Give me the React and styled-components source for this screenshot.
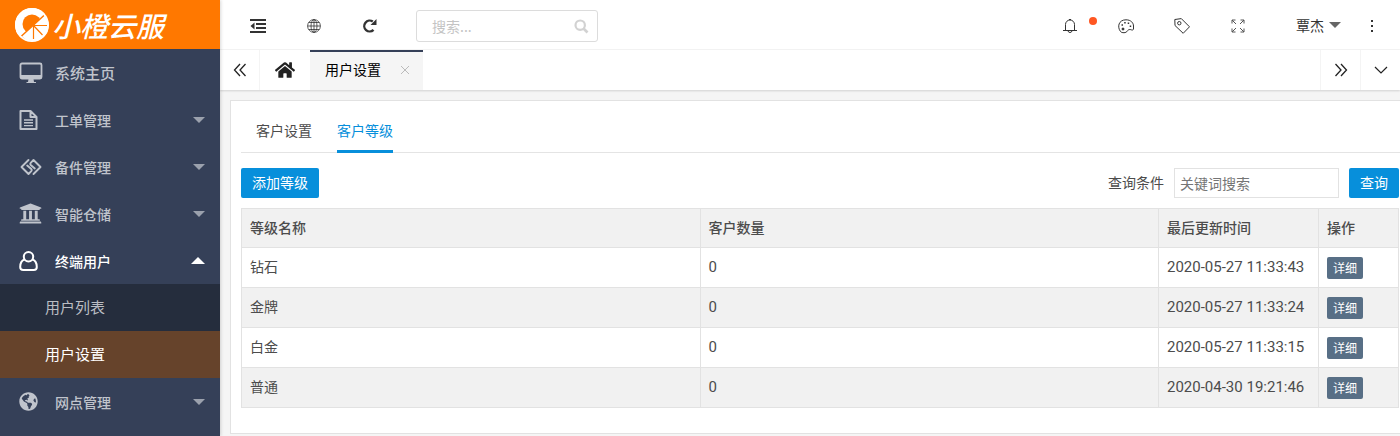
import React from 'react';
import styled, { createGlobalStyle } from 'styled-components';
import { FaHome, FaUniversity, FaGlobeAmericas } from 'react-icons/fa';

const GlobalStyle = createGlobalStyle`
  * {
    box-sizing: border-box;
  }
  body {
    margin: 0;
    background: #f5f5f5;
    color: #4c4c4c;
    font: 14px/20px "Noto Sans CJK SC", sans-serif;
  }
  a {
    color: inherit;
    text-decoration: none;
  }
  button, input {
    font: inherit;
  }
  button {
    padding: 0;
    border: 0;
    background: none;
    color: inherit;
    cursor: pointer;
  }
  svg {
    display: block;
    flex: none;
  }
`;

const Layout = styled.div`
  display: grid;
  grid-template-columns: 220px minmax(0, 1fr);
  min-height: 100vh;
`;

/* sidebar */

const Sidebar = styled.aside`
  background: #354058;
  box-shadow: 1px 0 3px rgba(0, 0, 0, 0.15);
  z-index: 1;
`;

const Brand = styled.a`
  display: flex;
  align-items: center;
  gap: 3px;
  height: 49px;
  padding-left: 15px;
  background: #ff7800;
  color: #fff;
  font-size: 28px;
  font-weight: 500;
  line-height: 46px;
  font-style: italic;
`;

const MenuLink = styled.a`
  display: flex;
  align-items: center;
  height: 47px;
  padding: 0 15px 0 19px;
  color: ${({ $open }) => ($open ? '#fff' : '#c0c4cc')};
  font-size: ${({ $home }) => ($home ? '15px' : '14px')};
  font-weight: 500;
`;

const MenuIcon = styled.span`
  display: flex;
  width: 36px;
`;

const Caret = styled.span`
  margin-left: auto;
  border: 6px solid transparent;
  border-top-color: ${({ $up }) => ($up ? 'transparent' : '#9ba1ad')};
  border-bottom-color: ${({ $up }) => ($up ? '#fff' : 'transparent')};
  border-width: ${({ $up }) => ($up ? '0 7px 7px' : '6px 6px 0')};
`;

const SubMenu = styled.div`
  background: #252d3d;
`;

const SubLink = styled.a`
  display: block;
  height: 47px;
  padding-left: 45px;
  background: ${({ $active }) => ($active ? '#66432b' : 'transparent')};
  color: ${({ $active }) => ($active ? '#fff' : '#babdc3')};
  font-size: 15px;
  line-height: 45px;
`;

/* header */

const Topbar = styled.header`
  display: flex;
  align-items: center;
  justify-content: space-between;
  height: 50px;
  padding: 0 8px 0 10px;
  border-bottom: 1px solid #f4f4f4;
  background: #fff;
  color: #333;
`;

const Group = styled.div`
  display: flex;
  align-items: center;
`;

const IconButton = styled.button`
  position: relative;
  display: flex;
  align-items: center;
  justify-content: center;
  width: ${({ $narrow }) => ($narrow ? '40px' : '56px')};
  height: 49px;
  padding-top: 3px;
`;

const Dot = styled.span`
  position: absolute;
  top: 17px;
  right: 1px;
  width: 8px;
  height: 8px;
  border-radius: 50%;
  background: #ff5722;
`;

const SearchBox = styled.label`
  display: flex;
  align-items: center;
  width: 182px;
  height: 32px;
  margin: 3px 0 0 18px;
  padding: 0 8px 0 15px;
  border: 1px solid #dcdcdc;
  border-radius: 3px;
  color: #d2d2d2;
`;

const SearchInput = styled.input`
  flex: 1;
  min-width: 0;
  padding: 0;
  border: 0;
  outline: 0;
  background: none;
  &::placeholder {
    color: #c4c4c4;
    opacity: 1;
  }
`;

const UserButton = styled.button`
  display: flex;
  align-items: center;
  gap: 5px;
  height: 49px;
  padding: 0 11px 0 30px;
`;

const UserCaret = styled.span`
  border: 6px solid transparent;
  border-top-color: #666;
  border-bottom: 0;
`;

const Tabbar = styled.nav`
  display: flex;
  height: 40px;
  background: #fff;
  box-shadow: 0 1px 2px rgba(0, 0, 0, 0.15);
  color: #222;
`;

const TabButton = styled.button`
  display: flex;
  align-items: center;
  justify-content: center;
  width: ${({ $wide }) => ($wide ? '50px' : '40px')};
  border-right: ${({ $side }) => ($side === 'right' ? '1px solid #f4f4f4' : '0')};
  border-left: ${({ $side }) => ($side === 'left' ? '1px solid #f4f4f4' : '0')};
`;

const PageTab = styled.div`
  display: flex;
  align-items: center;
  gap: 19px;
  margin-right: auto;
  padding: 0 13px 4px 15px;
  border-top: 2px solid #354058;
  background: #f5f5f5;
  color: #000;
`;

const CloseButton = styled.button`
  padding-top: 2px;
  color: #bbb;
`;

/* page */

const Card = styled.main`
  margin: 10px 0 0 10px;
  padding: 10px 1px 25px 10px;
  border: 1px solid #e2e2e2;
  border-right: 0;
  background: #fff;
`;

const Tabs = styled.nav`
  display: flex;
  gap: 25px;
  margin-right: -1px;
  padding-left: 15px;
  border-bottom: 1px solid #e4e4e4;
`;

const Tab = styled.a`
  height: 42px;
  margin-bottom: -1px;
  border-bottom: 3px solid ${({ $active }) => ($active ? '#078fdb' : 'transparent')};
  color: ${({ $active }) => ($active ? '#078fdb' : '#4c4c4c')};
  line-height: 38px;
`;

const Toolbar = styled.form`
  display: flex;
  align-items: center;
  gap: 10px;
  margin: 15px 0 10px;
`;

const Button = styled.button`
  height: 30px;
  padding: 0 11px 2px;
  border-radius: 2px;
  background: #078fdb;
  color: #fff;
`;

const SmallButton = styled(Button)`
  display: block;
  height: 22px;
  padding: 0 6px;
  background: #586f86;
  font-size: 12px;
`;

const FieldLabel = styled.label`
  margin-left: auto;
  padding-bottom: 2px;
`;

const Field = styled.input`
  width: 165px;
  height: 30px;
  padding: 0 5px;
  border: 1px solid #e2e2e2;
  &::placeholder {
    color: #757575;
    opacity: 1;
  }
`;

const Table = styled.table`
  width: 100%;
  border-collapse: collapse;
  table-layout: fixed;
`;

const Row = styled.tr`
  height: ${({ $head }) => ($head ? '39px' : '40px')};
  background: ${({ $shade }) => ($shade ? '#f1f1f1' : '#fff')};
`;

const HeadCell = styled.th`
  width: ${({ $width }) => $width || 'auto'};
  padding: 0 8px 2px;
  border: 1px solid #e2e2e2;
  font-weight: 500;
  text-align: left;
`;

const Cell = styled.td`
  padding: 0 8px 3px;
  border: 1px solid #e2e2e2;
`;

const NumberCell = styled(Cell)`
  padding-bottom: 1px;
  font-family: Roboto, "Noto Sans CJK SC", sans-serif;
  font-size: 15px;
`;

const ActionCell = styled(Cell)`
  padding-bottom: 0;
`;

/* icons */

const Icon = ({ size = 16, width = 1, children, ...args }) => (
  <svg
    width={size}
    height={size}
    viewBox={`0 0 ${size} ${size}`}
    fill="none"
    stroke="currentColor"
    strokeWidth={width}
    aria-hidden="true"
    {...args}
  >
    {children}
  </svg>
);

const LogoIcon = () => (
  <Icon size={34} stroke="none">
    <circle cx="17" cy="17" r="17" fill="#fff" />
    <circle cx="17" cy="16" r="9.500" fill="#ff7800" />
    <path d="M30 6.500A15 15 0 0 1 6 28.500Z" fill="#fff" stroke="#ff7800" strokeWidth="1.500" strokeLinejoin="round" />
    <path d="M18.500 17.500H32M18.500 17.500L27.500 27M18.500 17.500V31" stroke="#ff7800" strokeWidth="1.200" />
    <circle cx="17" cy="17" r="16.100" stroke="#fff" strokeWidth="1.800" />
  </Icon>
);

const DesktopIcon = () => (
  <Icon size={24} width={1.8}>
    <rect x="1.500" y="2.500" width="21" height="15" rx="1.500" />
    <path d="M1.500 14h21v2.500q0 1.500-1.500 1.500H3q-1.500 0-1.500-1.500zM9.500 18h5l.5 3h2v1H7.500v-1h1.500z" fill="currentColor" stroke="none" />
  </Icon>
);

const FileIcon = () => (
  <Icon size={20} width={2}>
    <path d="M1.500 1h10l6 6v12h-16zM11.500 1v6h6" strokeLinejoin="round" />
    <path d="M5 10h9M5 12.800h9M5 15.600h9" strokeWidth="1.400" />
  </Icon>
);

const LinkIcon = () => (
  <Icon size={24} width={1.9} strokeLinejoin="round" strokeLinecap="round">
    <path d="M9.500 5L2.500 12l7 7 2.800-2.800q1-1.200 0-2.200L8.200 10.500" />
    <path d="M14.500 19l7-7-7-7-2.800 2.800q-1 1.200 0 2.200l4.100 3.500" />
  </Icon>
);

const UserIcon = () => (
  <Icon size={20} width={2}>
    <circle cx="9.500" cy="5.700" r="4.700" />
    <path d="M5.500 8.500C2.500 9.500 1.200 12.500 1.200 16q0 3 3 3h10.600q3 0 3-3c0-3.500-1.300-6.500-4.300-7.500" />
  </Icon>
);

const OutdentIcon = () => (
  <Icon size={16} width={2}>
    <path d="M0 2h16M6 6h10M6 10h10M0 14h16" />
    <path d="M4.500 4.500v7L0.500 8z" fill="currentColor" stroke="none" />
  </Icon>
);

const GlobeIcon = () => (
  <Icon size={14} width={0.8}>
    <circle cx="7" cy="7" r="6.400" />
    <ellipse cx="7" cy="7" rx="3" ry="6.400" />
    <path d="M7 .7v12.600M.7 7h12.600M1.700 3.500h10.600M1.700 10.500h10.600" />
  </Icon>
);

const ReloadIcon = () => (
  <Icon size={16} width={2.400}>
    <path d="M11.500 11.800A5.400 5.400 0 1 1 10.800 3.600" />
    <path d="M14.500 1v6H8.500z" fill="currentColor" stroke="none" />
  </Icon>
);

const SearchIcon = () => (
  <Icon size={15} width={2.200}>
    <circle cx="6.200" cy="6.200" r="4.700" />
    <path d="M9.500 9.500l4 4" strokeWidth="2.600" />
  </Icon>
);

const BellIcon = () => (
  <Icon>
    <path d="M3.500 12.500V6.500a4.500 4.500 0 0 1 9 0v6M1 12.500h14M6 13c.3 2 3.700 2 4 0" />
    <path d="M7 1.500h2" />
  </Icon>
);

const PaletteIcon = () => (
  <Icon>
    <path d="M2.500 13.500C-1 9 .5 1.800 8 1.800c5 0 7.500 3.200 7.500 6.200v3.300q-.4 1-2 .6c-1.800-.7-3-.4-4 .8-.8 1.400-2 2-3.500 2-1.500 0-2.600-.2-3.500-1.200z" />
    <circle cx="5" cy="11" r="1" fill="currentColor" />
    <path d="M3.500 7h1.500M6.200 4.700h1.500M9.700 5.200h1.500M11.700 8.200h1.500" strokeWidth="1.500" />
  </Icon>
);

const TagIcon = () => (
  <Icon>
    <path d="M.8 1.500l6.500-.9 8.200 8.200-6.300 6.500L1 7.500z" strokeLinejoin="round" />
    <circle cx="5.300" cy="5.200" r="1.700" />
  </Icon>
);

const ExpandIcon = () => (
  <Icon size={14} stroke="#555">
    <path d="M1 4.500V1h3.500M1 1l4 4M9.500 1H13v3.500M13 1L9 5M1 9.500V13h3.500M1 13l4-4M13 9.500V13H9.500M13 13L9 9" />
  </Icon>
);

const MoreIcon = () => (
  <Icon fill="currentColor" stroke="none">
    <path d="M7 2h2v2H7zM7 7h2v2H7zM7 12h2v2H7z" />
  </Icon>
);

const ChevronsIcon = ({ flip }) => (
  <Icon size={14} width={1.300} transform={flip ? 'rotate(180)' : undefined}>
    <path d="M7 1L1.500 7 7 13M12.500 1L7 7l5.500 6" />
  </Icon>
);

const DownIcon = () => (
  <Icon size={14} width={1.200}>
    <path d="M1 4l6 6 6-6" />
  </Icon>
);

const CloseIcon = () => (
  <Icon size={10}>
    <path d="M1 1l8 8M9 1L1 9" />
  </Icon>
);

const menu = [
  { title: '系统主页', icon: <DesktopIcon />, home: true },
  { title: '工单管理', icon: <FileIcon /> },
  { title: '备件管理', icon: <LinkIcon /> },
  { title: '智能仓储', icon: <FaUniversity size={23} /> },
  { title: '终端用户', icon: <UserIcon />, children: ['用户列表', '用户设置'] },
  { title: '网点管理', icon: <FaGlobeAmericas size={19} /> },
];

const levels = [
  { name: '钻石', count: 0, time: '2020-05-27 11:33:43' },
  { name: '金牌', count: 0, time: '2020-05-27 11:33:24' },
  { name: '白金', count: 0, time: '2020-05-27 11:33:15' },
  { name: '普通', count: 0, time: '2020-04-30 19:21:46' },
];

const Menu = () => (
  <nav>
    {menu.map(({ title, icon, home, children }) => (
      <React.Fragment key={title}>
        <MenuLink href="#" $home={home} $open={!!children}>
          <MenuIcon>{icon}</MenuIcon>
          {title}
          {!home && <Caret $up={!!children} />}
        </MenuLink>
        {children && (
          <SubMenu>
            {children.map((name) => (
              <SubLink href="#" key={name} $active={name === '用户设置'}>{name}</SubLink>
            ))}
          </SubMenu>
        )}
      </React.Fragment>
    ))}
  </nav>
);

const Header = () => (
  <Topbar>
    <Group>
      <IconButton aria-label="收起菜单"><OutdentIcon /></IconButton>
      <IconButton aria-label="网站"><GlobeIcon /></IconButton>
      <IconButton aria-label="刷新"><ReloadIcon /></IconButton>
      <SearchBox>
        <SearchInput type="text" placeholder="搜索..." aria-label="搜索" />
        <SearchIcon />
      </SearchBox>
    </Group>
    <Group>
      <IconButton aria-label="消息"><BellIcon /><Dot /></IconButton>
      <IconButton aria-label="主题"><PaletteIcon /></IconButton>
      <IconButton aria-label="便签"><TagIcon /></IconButton>
      <IconButton aria-label="全屏"><ExpandIcon /></IconButton>
      <UserButton>覃杰<UserCaret /></UserButton>
      <IconButton $narrow aria-label="更多"><MoreIcon /></IconButton>
    </Group>
  </Topbar>
);

const PageTabs = () => (
  <Tabbar>
    <TabButton $side="right" aria-label="向左"><ChevronsIcon /></TabButton>
    <TabButton $wide aria-label="主页"><FaHome size={20} /></TabButton>
    <PageTab>
      用户设置
      <CloseButton aria-label="关闭"><CloseIcon /></CloseButton>
    </PageTab>
    <TabButton $side="left" aria-label="向右"><ChevronsIcon flip /></TabButton>
    <TabButton $side="left" aria-label="展开"><DownIcon /></TabButton>
  </Tabbar>
);

const LevelTable = () => (
  <Table>
    <thead>
      <Row $head $shade>
        <HeadCell>等级名称</HeadCell>
        <HeadCell>客户数量</HeadCell>
        <HeadCell $width="160px">最后更新时间</HeadCell>
        <HeadCell $width="80px">操作</HeadCell>
      </Row>
    </thead>
    <tbody>
      {levels.map(({ name, count, time }, i) => (
        <Row key={name} $shade={i % 2 === 1}>
          <Cell>{name}</Cell>
          <NumberCell>{count}</NumberCell>
          <NumberCell>{time}</NumberCell>
          <ActionCell><SmallButton type="button">详细</SmallButton></ActionCell>
        </Row>
      ))}
    </tbody>
  </Table>
);

export default function App() {
  return (
    <>
      <GlobalStyle />
      <Layout>
        <Sidebar>
          <Brand href="#"><LogoIcon />小橙云服</Brand>
          <Menu />
        </Sidebar>
        <div>
          <Header />
          <PageTabs />
          <Card>
            <Tabs>
              <Tab href="#">客户设置</Tab>
              <Tab href="#" $active>客户等级</Tab>
            </Tabs>
            <Toolbar onSubmit={(e) => e.preventDefault()}>
              <Button type="button">添加等级</Button>
              <FieldLabel htmlFor="keyword">查询条件</FieldLabel>
              <Field id="keyword" type="text" placeholder="关键词搜索" />
              <Button type="submit">查询</Button>
            </Toolbar>
            <LevelTable />
          </Card>
        </div>
      </Layout>
    </>
  );
}
